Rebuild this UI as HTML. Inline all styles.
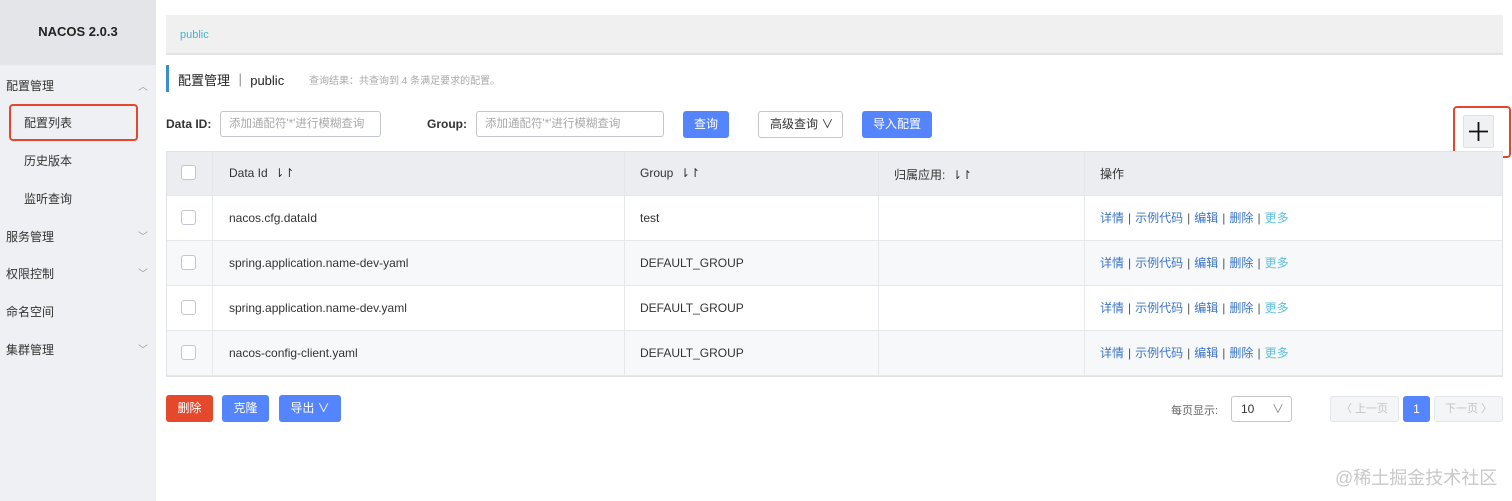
<!DOCTYPE html>
<html><head><meta charset="utf-8"><style>
*{box-sizing:border-box;margin:0;padding:0}
body{width:1512px;height:501px;background:#fff;font-family:"Liberation Sans","Noto Sans CJK SC",sans-serif;position:relative;overflow:hidden;color:#333}
.a{position:absolute}
.side{left:0;top:0;width:156px;height:501px;background:#eef0f3}
.sh{left:0;top:0;width:156px;height:65px;background:#e3e5e8;font-weight:bold;font-size:13px;color:#222;text-align:center;line-height:64px}
.mi{font-size:12px;color:#333}
.chev{font-size:10px;color:#999}
.inp{height:26px;border:1px solid #c4c6cf;border-radius:3px;font-size:11.5px;color:#aaa;line-height:24px;padding-left:8px;background:#fff}
.btn{height:27px;border-radius:3px;background:#5584ff;color:#fff;font-size:12px;text-align:center;line-height:27px}
.row{left:166px;width:1337px;height:45px;border-bottom:1px solid #e6e7eb}
.cb{width:15px;height:15px;border:1px solid #c4c6cf;border-radius:3px;background:#fff}
.cell{font-size:12px;color:#333}
.op{font-size:12px;color:#3c75c9}
.op span{color:#555;margin:0 4px}
.op b{font-weight:normal;color:#5bc0de}
.vl{width:1px;background:#e6e7eb;top:151px;height:225px}
</style></head><body>
<div class="a side"></div>
<div class="a sh">NACOS 2.0.3</div>
<div class="a mi" style="left:6px;top:77px">配置管理</div><div class="a chev" style="left:138px;top:78px">︿</div>
<div class="a" style="left:9px;top:104px;width:129px;height:37px;border:2px solid #e4472c;border-radius:4px"></div>
<div class="a mi" style="left:24px;top:114px">配置列表</div>
<div class="a mi" style="left:24px;top:152px">历史版本</div>
<div class="a mi" style="left:24px;top:190px">监听查询</div>
<div class="a mi" style="left:6px;top:228px">服务管理</div><div class="a chev" style="left:138px;top:228px">﹀</div>
<div class="a mi" style="left:6px;top:265px">权限控制</div><div class="a chev" style="left:138px;top:265px">﹀</div>
<div class="a mi" style="left:6px;top:303px">命名空间</div>
<div class="a mi" style="left:6px;top:341px">集群管理</div><div class="a chev" style="left:138px;top:341px">﹀</div>

<div class="a" style="left:166px;top:15px;width:1337px;height:40px;background:#f0f0f1;border-bottom:2px solid #e2e3e6"></div>
<div class="a" style="left:180px;top:29px;font-size:11px;color:#45b5c8">public</div>

<div class="a" style="left:166px;top:65px;width:3px;height:27px;background:#3c8dca"></div>
<div class="a" style="left:178px;top:70px;font-size:13px;color:#222">配置管理 ｜ public</div>
<div class="a" style="left:309px;top:72px;font-size:10px;color:#aaa">查询结果：共查询到 4 条满足要求的配置。</div>

<div class="a" style="left:166px;top:117px;font-size:12px;font-weight:bold;color:#333">Data ID:</div>
<div class="a inp" style="left:220px;top:111px;width:161px">添加通配符'*'进行模糊查询</div>
<div class="a" style="left:427px;top:117px;font-size:12px;font-weight:bold;color:#333">Group:</div>
<div class="a inp" style="left:476px;top:111px;width:188px">添加通配符'*'进行模糊查询</div>
<div class="a btn" style="left:683px;top:111px;width:46px">查询</div>
<div class="a" style="left:758px;top:111px;width:85px;height:27px;border:1px solid #c4c6cf;border-radius:3px;font-size:12px;line-height:25px;padding-left:11px;color:#333">高级查询 ∨</div>
<div class="a btn" style="left:862px;top:111px;width:70px">导入配置</div>

<div class="a" style="left:1453px;top:106px;width:58px;height:52px;border:2px solid #e4472c;border-radius:4px"></div>
<div class="a" style="left:1463px;top:115px;width:31px;height:33px;background:#f0f1f2;border:1px solid #e0e0e0;border-radius:2px"></div>
<svg class="a" style="left:1468px;top:121px" width="21" height="21"><path d="M10.5 1V20M1 10.5H20" stroke="#111" stroke-width="1.8"/></svg>

<div class="a row" style="top:151px;background:#ebedf0;border-top:1px solid #e0e2e6"></div>
<div class="a row" style="top:196px;background:#fff"></div>
<div class="a row" style="top:241px;background:#f7f8fa"></div>
<div class="a row" style="top:286px;background:#fff"></div>
<div class="a row" style="top:331px;background:#f7f8fa"></div>
<div class="a" style="left:166px;top:151px;width:1337px;height:226px;border:1px solid #e0e2e6"></div>
<div class="a vl" style="left:212px"></div><div class="a vl" style="left:624px"></div><div class="a vl" style="left:878px"></div><div class="a vl" style="left:1084px"></div>

<div class="a cb" style="left:181px;top:165px"></div>
<div class="a cell" style="left:229px;top:166px">Data Id &nbsp;⇂↾</div>
<div class="a cell" style="left:640px;top:166px">Group &nbsp;⇂↾</div>
<div class="a cell" style="left:894px;top:166px">归属应用: &nbsp;⇂↾</div>
<div class="a cell" style="left:1100px;top:165px">操作</div>

<div class="a cb" style="left:181px;top:210px"></div><div class="a cell" style="left:229px;top:211px">nacos.cfg.dataId</div><div class="a cell" style="left:640px;top:211px">test</div>
<div class="a cb" style="left:181px;top:255px"></div><div class="a cell" style="left:229px;top:256px">spring.application.name-dev-yaml</div><div class="a cell" style="left:640px;top:256px">DEFAULT_GROUP</div>
<div class="a cb" style="left:181px;top:300px"></div><div class="a cell" style="left:229px;top:301px">spring.application.name-dev.yaml</div><div class="a cell" style="left:640px;top:301px">DEFAULT_GROUP</div>
<div class="a cb" style="left:181px;top:345px"></div><div class="a cell" style="left:229px;top:346px">nacos-config-client.yaml</div><div class="a cell" style="left:640px;top:346px">DEFAULT_GROUP</div>
<div class="a op" style="left:1100px;top:209px">详情<span>|</span>示例代码<span>|</span>编辑<span>|</span>删除<span>|</span><b>更多</b></div>
<div class="a op" style="left:1100px;top:254px">详情<span>|</span>示例代码<span>|</span>编辑<span>|</span>删除<span>|</span><b>更多</b></div>
<div class="a op" style="left:1100px;top:299px">详情<span>|</span>示例代码<span>|</span>编辑<span>|</span>删除<span>|</span><b>更多</b></div>
<div class="a op" style="left:1100px;top:344px">详情<span>|</span>示例代码<span>|</span>编辑<span>|</span>删除<span>|</span><b>更多</b></div>

<div class="a btn" style="left:166px;top:395px;width:47px;background:#e5492b">删除</div>
<div class="a btn" style="left:222px;top:395px;width:47px">克隆</div>
<div class="a btn" style="left:279px;top:395px;width:62px">导出 ∨</div>

<div class="a" style="left:1171px;top:402px;font-size:11px;color:#666">每页显示:</div>
<div class="a" style="left:1231px;top:396px;width:61px;height:26px;border:1px solid #c4c6cf;border-radius:3px;font-size:12px;line-height:24px;padding-left:9px">10<span style="position:absolute;left:40px;color:#888">∨</span></div>
<div class="a" style="left:1330px;top:396px;width:69px;height:26px;background:#f4f5f7;border:1px solid #e4e6ea;border-radius:3px;font-size:11px;color:#c0c3c8;line-height:24px;text-align:center">〈 上一页</div>
<div class="a btn" style="left:1403px;top:396px;width:27px;height:26px;line-height:26px">1</div>
<div class="a" style="left:1434px;top:396px;width:69px;height:26px;background:#f4f5f7;border:1px solid #e4e6ea;border-radius:3px;font-size:11px;color:#c0c3c8;line-height:24px;text-align:center">下一页 〉</div>

<div class="a" style="left:1335px;top:464px;font-size:18px;color:#c8c8c8">@稀土掘金技术社区</div>
</body></html>
